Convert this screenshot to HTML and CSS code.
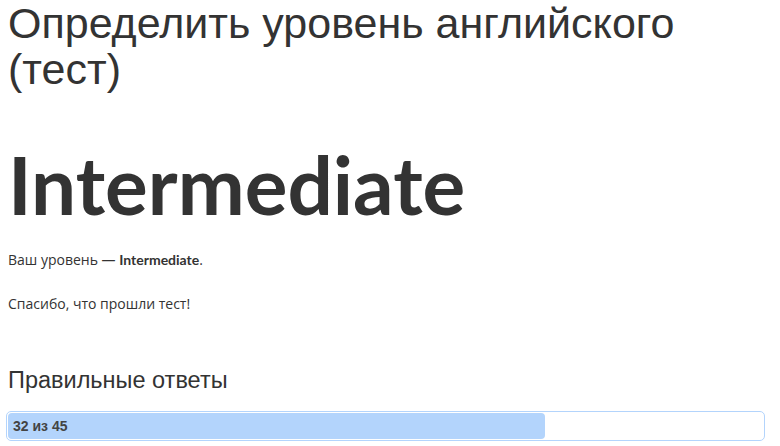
FILE: index.html
```html
<!DOCTYPE html>
<html lang="ru">
<head>
    <meta charset="UTF-8">
    <meta name="viewport" content="width=device-width, initial-scale=1.0">
    <title>Определить уровень английского (тест)</title>
    <link rel="stylesheet" href="styles.css">
</head>
<body>

<div class="page">
    <h1 class="title">Определить уровень английского (тест)</h1>

    <div class="level">Intermediate</div>

    <p class="text">Ваш уровень — <b>Intermediate</b>.</p>
    <p class="text">Спасибо, что прошли тест!</p>

    <h3 class="subtitle">Правильные ответы</h3>
    <div class="progress">
        <div class="progress-bar" style="width: 71.1%">32 из 45</div>
    </div>
</div>

</body>
</html>
```

FILE: styles.css
```css
body {
    margin: 0;
    font-family: "Open Sans", sans-serif;
    color: #333;
    background: #fff;
}
.page {
    padding: 0 15px 0 8px;
}
.title {
    font-family: "Liberation Sans", Arial, sans-serif;
    font-weight: normal;
    font-size: 43px;
    line-height: 46px;
    margin: 0;
}
.level {
    font-family: Lato, sans-serif;
    font-weight: bold;
    font-size: 80px;
    line-height: 1;
    margin: 52px 0 0;
}
.text {
    font-size: 14px;
    line-height: 20px;
    margin: 26px 0 0;
}
.text + .text {
    margin-top: 24px;
}
.text b {
    font-family: Lato, sans-serif;
}
.subtitle {
    font-family: "Liberation Sans", Arial, sans-serif;
    font-weight: normal;
    font-size: 23.5px;
    line-height: 1.2;
    margin: 52px 0 0;
}
.progress {
    margin: 17px 0 0 -2px;
    height: 26px;
    border: 1px solid #b3d4fc;
    border-radius: 5px;
    padding: 1px;
}
.progress-bar {
    height: 100%;
    background: #b3d4fc;
    border-radius: 4px;
    font-family: "Liberation Sans", Arial, sans-serif;
    font-weight: bold;
    font-size: 14px;
    line-height: 26px;
    color: #444;
    padding-left: 5px;
    box-sizing: border-box;
}
```
